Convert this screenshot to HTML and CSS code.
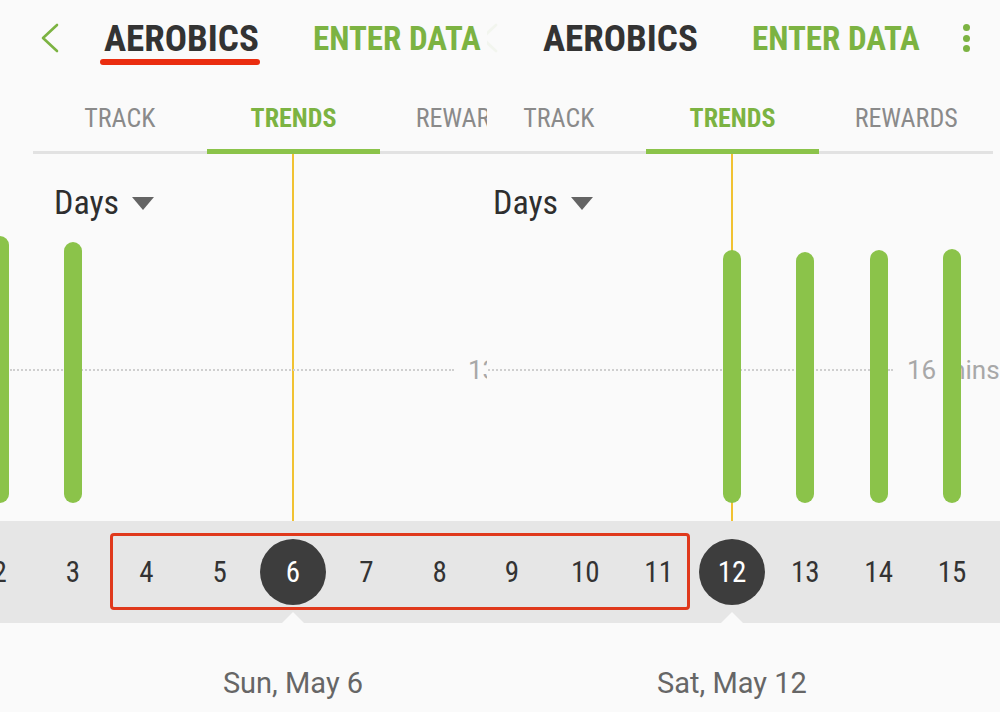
FILE: index.html
```html
<!DOCTYPE html>
<html>
<head>
<meta charset="utf-8">
<link rel="stylesheet" href="styles.css">
</head>
<body>
<div class="stage">
  <div class="panel panel-a">
    <div class="screen">
      <div class="header">
        <svg class="back" width="20" height="30" viewBox="0 0 20 30"><path d="M17 2 L3 15 L17 28" fill="none" stroke="#7cb342" stroke-width="2.6" stroke-linecap="round" stroke-linejoin="round"/></svg>
        <div class="title">AEROBICS</div>
        <div class="action">ENTER DATA</div>
        <div class="kebab"><span></span><span></span><span></span></div>
      </div>
      <div class="tabs">
        <div class="tab">TRACK</div>
        <div class="tab active">TRENDS</div>
        <div class="tab">REWARDS</div>
      </div>
      <div class="chart">
        <div class="cursor"></div>
        <div class="goal"><span class="goal-label">13 mins</span></div>
        <div class="period">Days <span class="caret"></span></div>
        <div class="bars">
          <div class="col"><div class="bar" style="height:267px"></div></div>
          <div class="col"><div class="bar" style="height:261px"></div></div>
          <div class="col"></div><div class="col"></div><div class="col"></div>
          <div class="col"></div><div class="col"></div><div class="col"></div>
        </div>
      </div>
      <div class="strip">
        <div class="day">2</div><div class="day">3</div><div class="day">4</div><div class="day">5</div>
        <div class="day sel"><span>6</span></div>
        <div class="day">7</div><div class="day">8</div><div class="day">9</div>
      </div>
      <div class="date">Sun, May 6</div>
    </div>
  </div>
  <div class="panel panel-b">
    <div class="screen shifted">
      <div class="header">
        <svg class="back faded" width="20" height="30" viewBox="0 0 20 30"><path d="M17 2 L3 15 L17 28" fill="none" stroke="#7cb342" stroke-width="2.6" stroke-linecap="round" stroke-linejoin="round"/></svg>
        <div class="title">AEROBICS</div>
        <div class="action">ENTER DATA</div>
        <div class="kebab"><span></span><span></span><span></span></div>
      </div>
      <div class="tabs">
        <div class="tab">TRACK</div>
        <div class="tab active">TRENDS</div>
        <div class="tab">REWARDS</div>
      </div>
      <div class="chart">
        <div class="cursor"></div>
        <div class="goal"><span class="goal-label">16 mins</span></div>
        <div class="period">Days <span class="caret"></span></div>
        <div class="bars">
          <div class="col"></div><div class="col"></div><div class="col"></div><div class="col"></div>
          <div class="col"><div class="bar" style="height:253px"></div></div>
          <div class="col"><div class="bar" style="height:251px"></div></div>
          <div class="col"><div class="bar" style="height:253px"></div></div>
          <div class="col"><div class="bar" style="height:254px"></div></div>
        </div>
      </div>
      <div class="strip">
        <div class="day">8</div><div class="day">9</div><div class="day">10</div><div class="day">11</div>
        <div class="day sel"><span>12</span></div>
        <div class="day">13</div><div class="day">14</div><div class="day">15</div>
      </div>
      <div class="date">Sat, May 12</div>
    </div>
  </div>
  <div class="mark mark-line"></div>
  <div class="mark mark-box"></div>
</div>
</body>
</html>
```

FILE: styles.css
```css
* { box-sizing: border-box; }
html, body { margin: 0; padding: 0; background: #fafafa; }
.stage {
  position: relative;
  width: 1000px;
  height: 712px;
  display: flex;
  overflow: hidden;
  background: #fafafa;
  font-family: "Roboto Condensed", "Liberation Sans Narrow", "DejaVu Sans Condensed", sans-serif;
}
.panel { overflow: hidden; flex: none; height: 712px; }
.panel-a { width: 487px; }
.panel-b { width: 513px; }
.screen {
  width: 600px;
  height: 712px;
  display: flex;
  flex-direction: column;
}
.shifted { margin-left: -48px; }

.header {
  height: 76px;
  display: flex;
  align-items: center;
  flex: none;
}
.back { margin-left: 40px; flex: none; }
.back.faded { opacity: 0.06; }
.title {
  margin-left: 44px;
  width: 209px;
  flex: none;
  font-size: 37px;
  font-weight: 700;
  color: #333;
  white-space: nowrap;
}
.action {
  width: 211px;
  flex: none;
  font-size: 33px;
  font-weight: 700;
  color: #7cb342;
  white-space: nowrap;
}
.kebab {
  width: 8px;
  display: flex;
  flex-direction: column;
  gap: 3.5px;
  flex: none;
}
.kebab span {
  width: 7px; height: 7px; border-radius: 50%;
  background: #7cb342;
}

.tabs {
  margin: 0 33px;
  width: 521px;
  display: flex;
  border-bottom: 3px solid #e2e2e2;
  flex: none;
}
.tab {
  flex: 1;
  text-align: center;
  padding-top: 28px;
  padding-bottom: 17px;
  line-height: 28px;
  font-size: 26px;
  color: #8a8a8a;
  border-bottom: 5px solid transparent;
  margin-bottom: -3px;
  white-space: nowrap;
}
.tab.active {
  color: #7cb342;
  font-weight: 700;
  border-bottom-color: #8bc34a;
}

.chart {
  position: relative;
  height: 367px;
  flex: none;
  display: flex;
  flex-direction: column;
}
.cursor {
  position: absolute;
  left: 292px;
  top: 0;
  bottom: 0;
  width: 1.5px;
  background: #f1c232;
}
.goal {
  position: absolute;
  left: 10px;
  width: 444px;
  top: 215px;
  border-top: 2px dotted #cfcfcf;
}
.goal-label {
  position: absolute;
  left: 458px;
  top: -17px;
  font-family: Roboto, "Noto Sans", sans-serif;
  font-size: 26px;
  line-height: 32px;
  color: #a8a8a8;
  white-space: nowrap;
}
.period {
  margin-top: 28px;
  padding-left: 54px;
  font-size: 34px;
  line-height: 40px;
  color: #2e2e2e;
  display: flex;
  align-items: center;
  gap: 13px;
}
.caret {
  width: 0; height: 0;
  border-left: 11px solid transparent;
  border-right: 11px solid transparent;
  border-top: 13px solid #646464;
  margin-top: 3px;
}
.bars {
  position: relative;
  z-index: 1;
  flex: 1;
  display: flex;
  align-items: flex-end;
  margin-left: -37px;
  padding-bottom: 18px;
}
.col {
  flex: 0 0 73.333px;
  display: flex;
  justify-content: center;
  align-items: flex-end;
  height: 100%;
}
.bar {
  width: 18px;
  border-radius: 9px;
  background: #8bc34a;
}

.strip {
  height: 102px;
  flex: none;
  background: #e6e6e6;
  display: flex;
  width: 637px;
}
.day {
  flex: 0 0 73.333px;
  display: flex;
  align-items: center;
  justify-content: center;
  font-size: 29px;
  color: #333;
  position: relative;
}
.strip .day:first-child { margin-left: -37px; }
.day.sel span {
  width: 66px; height: 66px;
  border-radius: 50%;
  background: #3d3d3d;
  color: #fff;
  display: flex;
  align-items: center;
  justify-content: center;
}
.day.sel::after {
  content: "";
  position: absolute;
  bottom: 0;
  left: 50%;
  margin-left: -11px;
  border-left: 11px solid transparent;
  border-right: 11px solid transparent;
  border-bottom: 11px solid #fafafa;
}

.date {
  width: 586px;
  text-align: center;
  padding-top: 38px;
  line-height: 44px;
  font-family: Roboto, "Noto Sans", sans-serif;
  font-size: 29px;
  color: #666;
}

.mark { position: absolute; }
.mark-line {
  left: 100px; top: 59px;
  width: 160px; height: 6px;
  border-radius: 3px;
  background: #ea2d10;
}
.mark-box {
  left: 110px; top: 533px;
  width: 580px; height: 77px;
  border: 3px solid #e0391c;
  border-radius: 4px;
}
```
